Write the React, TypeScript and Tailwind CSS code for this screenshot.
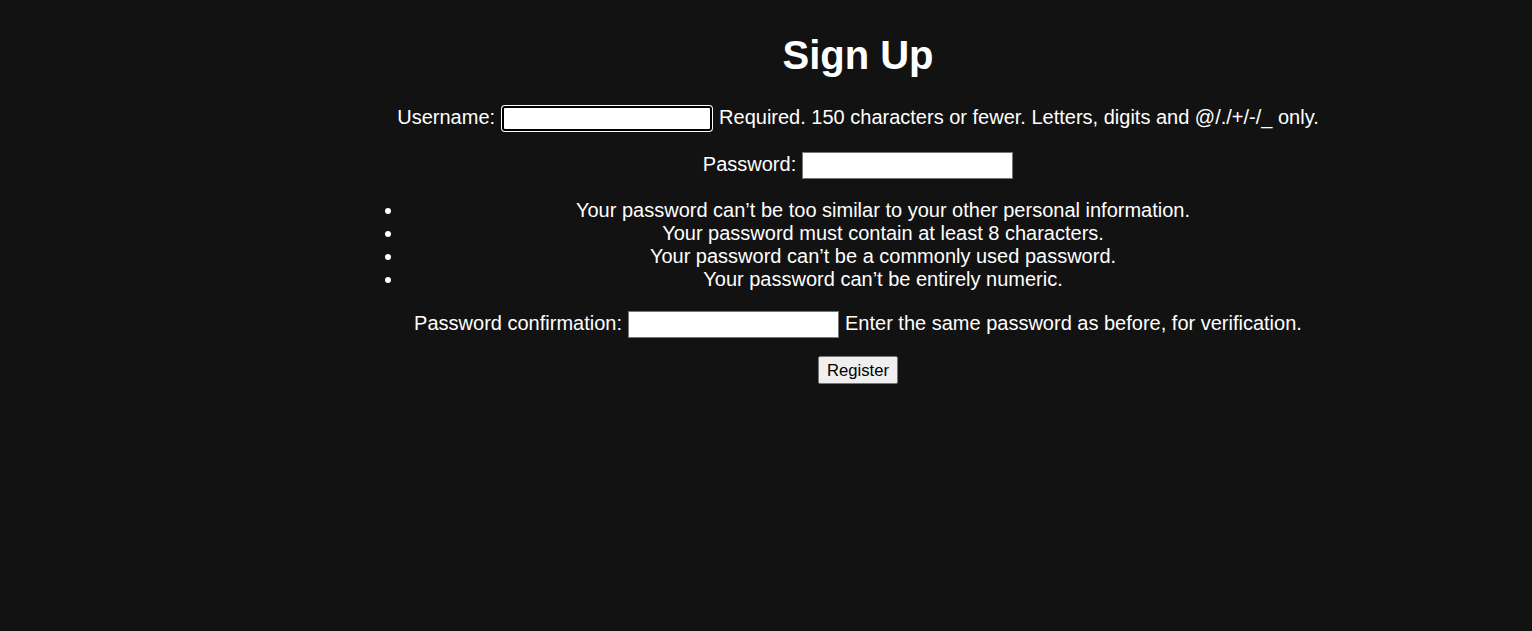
import React from "react";

export default function App() {
  return (
    <div className="min-h-screen bg-[#121212] text-white font-['Liberation_Sans',Arial,sans-serif] pl-[184px] pt-[32px]">
      <div className="mx-auto w-[1009px] text-center">
        <h1 className="text-[40px] leading-[46px] font-bold">Sign Up</h1>
        <form className="text-[20px] leading-[23px]">
          <div className="mt-[27px] flex justify-center items-start gap-[6px]">
            <span className="pt-[1px]">Username:</span>
            <input
              type="text"
              className="m-[1px] w-[210px] h-[25px] bg-white border-2 border-black rounded-[3px] shadow-[0_0_0_1px_#ffffff] outline-none"
            />
            <span className="pt-[1px]">
              Required. 150 characters or fewer. Letters, digits and @/./+/-/_ only.
            </span>
          </div>
          <div className="mt-[20px] flex justify-center items-start gap-[6px]">
            <span className="pt-[1px]">Password:</span>
            <input
              type="password"
              className="w-[211px] h-[27px] bg-white border border-[#767676] outline-none"
            />
          </div>
          <ul className="mt-[20px] list-disc pl-[50px]">
            <li>Your password can’t be too similar to your other personal information.</li>
            <li>Your password must contain at least 8 characters.</li>
            <li>Your password can’t be a commonly used password.</li>
            <li>Your password can’t be entirely numeric.</li>
          </ul>
          <div className="mt-[20px] flex justify-center items-start gap-[6px]">
            <span className="pt-[1px]">Password confirmation:</span>
            <input
              type="password"
              className="w-[211px] h-[27px] bg-white border border-[#767676] outline-none"
            />
            <span className="pt-[1px]">Enter the same password as before, for verification.</span>
          </div>
          <div className="mt-[18px]">
            <button
              type="button"
              className="h-[28px] px-[8px] text-[16.67px] leading-[19px] text-black bg-[#efefef] border border-[#767676] rounded-[2px]"
            >
              Register
            </button>
          </div>
        </form>
      </div>
    </div>
  );
}
